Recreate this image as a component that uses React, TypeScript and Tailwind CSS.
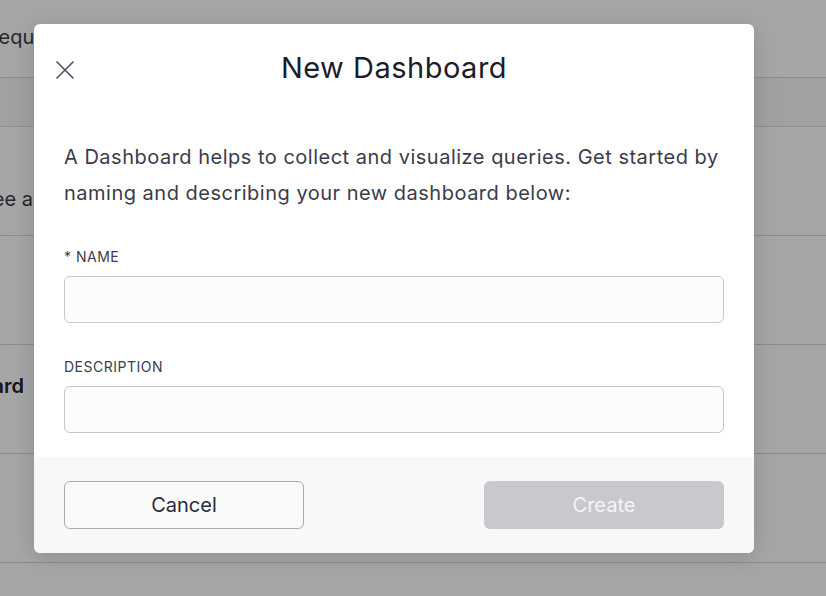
const App = () => {
  return (
    <div className="relative h-[596px] w-[826px] overflow-hidden bg-white font-['Inter',sans-serif]">
      {/* page behind the dialog */}
      <div className="flex flex-col">
        <div className="flex h-[78px] items-center border-b border-[#d8d8d8]">
          <span className="ml-[-14px] mt-[-4px] text-[20px] text-[#3c3c48]">Requests</span>
        </div>
        <div className="h-[49px] border-b border-[#d8d8d8] bg-[#f6f8fb]"></div>
        <div className="flex h-[109px] items-end border-b border-[#d8d8d8] pb-[21px]">
          <span className="ml-[-20px] text-[20px] text-[#3c3c48]">See all</span>
        </div>
        <div className="h-[109px] border-b border-[#d8d8d8]"></div>
        <div className="h-[109px] border-b border-[#d8d8d8] pt-[26px]">
          <div className="flex w-[24px] justify-end">
            <span className="whitespace-nowrap text-[20px] font-semibold text-[#22222e]">Dashboard</span>
          </div>
        </div>
        <div className="h-[109px] border-b border-[#d8d8d8]"></div>
      </div>

      {/* overlay */}
      <div className="absolute inset-0 bg-black/35"></div>

      {/* dialog */}
      <div className="absolute left-[34px] top-[24px] flex w-[720px] flex-col overflow-hidden rounded-[6px] bg-white shadow-[0_4px_24px_rgba(0,0,0,0.15)]">
        <div className="relative flex h-[90px] items-center justify-center">
          <button className="absolute left-[21px] top-[36px] text-[#4b5264]">
            <svg width="20" height="20" viewBox="0 0 20 20" fill="none" stroke="currentColor" strokeWidth="1.6">
              <path d="M1.5 1.5 L18.5 18.5 M18.5 1.5 L1.5 18.5" />
            </svg>
          </button>
          <h2 className="mt-[-2px] text-[29px] font-normal tracking-[0.5px] text-[#1c1c2a]">New Dashboard</h2>
        </div>

        <div className="px-[30px] pt-[25px] pb-[24px]">
          <p className="text-[20px] leading-[36px] tracking-[0.5px] text-[#3b3b4b]">
            A Dashboard helps to collect and visualize queries. Get started by naming and describing your new dashboard below:
          </p>

          <div className="mt-[36px] text-[14px] leading-[20px] tracking-[0.5px] text-[#3b3b4b]">* NAME</div>
          <input
            type="text"
            className="mt-[9px] block h-[47px] w-full rounded-[6px] border border-[#c6c6c6] bg-[#fcfcfc] px-3 text-[16px] outline-none"
          />

          <div className="mt-[34px] text-[14px] leading-[20px] tracking-[0.5px] text-[#3b3b4b]">DESCRIPTION</div>
          <input
            type="text"
            className="mt-[9px] block h-[47px] w-full rounded-[6px] border border-[#c6c6c6] bg-[#fcfcfc] px-3 text-[16px] outline-none"
          />
        </div>

        <div className="flex h-[96px] items-center justify-between bg-[#f8f8f8] px-[30px]">
          <button className="h-[48px] w-[240px] rounded-[6px] border border-[#a9a9a9] bg-[#fafafa] text-[20px] text-[#2b2b3a]">
            Cancel
          </button>
          <button className="h-[48px] w-[240px] rounded-[6px] bg-[#c9c9cd] text-[20px] text-[#f4f4f6]">
            Create
          </button>
        </div>
      </div>
    </div>
  );
};

export default App;
